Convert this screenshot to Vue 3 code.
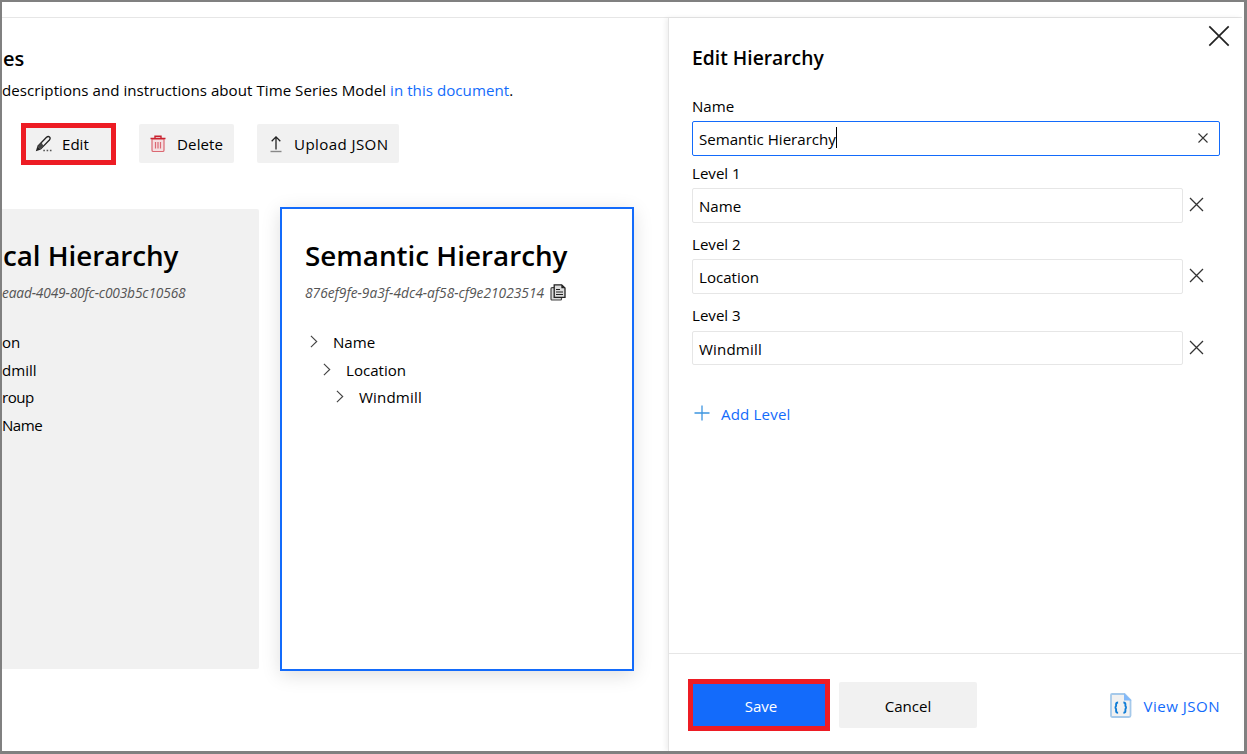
<script setup>
import { ref } from 'vue'

const hierarchyName = ref('Semantic Hierarchy')
const levels = ref(['Name', 'Location', 'Windmill'])
const physicalLevels = ['on', 'dmill', 'roup', 'Name']
</script>

<template>
  <div class="window">
    <header class="topbar"></header>
    <div class="body">
      <main class="main">
        <h2 class="page-title">es</h2>
        <p class="intro">descriptions and instructions about Time Series Model <a>in this document</a>.</p>
        <div class="toolbar">
          <button class="tool edit">
            <svg width="18" height="18" viewBox="0 0 18 18">
              <path d="M2.600 11.500 11.500 2.300Q13.200.800 14.500 2T14.400 5L5.500 14.100" fill="none" stroke="#222" stroke-width="1.300" />
              <path d="M.8 16.300 2.400 11.200 6 14.500Z" fill="#222" />
              <path d="M2.400 11.500 6.500 7.300 8.300 10.800 5.300 14.100Z" fill="#444" />
              <path d="M8.300 15.600h1.600M11.600 15.600h1.600M14.900 15.600h1.600" stroke="#555" stroke-width="1.500" />
            </svg>
            <span>Edit</span>
          </button>
          <button class="tool delete">
            <svg width="16" height="18" viewBox="0 0 16 18">
              <path d="M2 4v11.2q0 1.3 1.3 1.3h9.4q1.3 0 1.3-1.3V4Z" fill="#f5dfe1" stroke="#db6872" stroke-width="1.2" />
              <path d="M5.500 7v6.500M8 7v6.500M10.500 7v6.500" stroke="#db6872" stroke-width="1.200" />
              <path d="M.5 3.500h15M5 3V1.200h6V3" fill="none" stroke="#c9222f" stroke-width="1.400" />
            </svg>
            <span>Delete</span>
          </button>
          <button class="tool upload">
            <svg width="12" height="17" viewBox="0 0 12 17">
              <path d="M.5 15.500h11" stroke="#888" stroke-width="1.400" />
              <path d="M6 13.500V1M1.700 5.200 6 .9l4.300 4.300" fill="none" stroke="#222" stroke-width="1.300" />
            </svg>
            <span>Upload JSON</span>
          </button>
        </div>
        <div class="cards">
          <section class="card physical">
            <h1>cal Hierarchy</h1>
            <div class="guid">eaad-4049-80fc-c003b5c10568</div>
            <ul>
              <li v-for="l in physicalLevels" :key="l">{{ l }}</li>
            </ul>
          </section>
          <section class="card selected">
            <h1>Semantic Hierarchy</h1>
            <div class="guid">
              <span>876ef9fe-9a3f-4dc4-af58-cf9e21023514</span>
              <svg width="16" height="17" viewBox="0 0 16 17">
                <rect x="1" y="3.700" width="10.500" height="12.300" rx="1" fill="#d8d8d8" stroke="#444" stroke-width="1.200" />
                <path d="M4.200.8h7.500L15 4v9.300H4.200Z" fill="#ddd" stroke="#222" stroke-width="1.300" />
                <path d="M11.300.8V4.300H15Z" fill="#222" />
                <path d="M6 5.500h4M6 8h7M6 10.500h7" stroke="#222" stroke-width="1.200" />
              </svg>
            </div>
            <ul class="tree">
              <li v-for="l in levels" :key="l">
                <svg width="8" height="13" viewBox="0 0 8 13">
                  <path d="M.9.9 6.700 6.500.9 12.100" fill="none" stroke="#444" stroke-width="1.150" />
                </svg>
                <span>{{ l }}</span>
              </li>
            </ul>
          </section>
        </div>
      </main>

      <aside class="panel">
        <svg class="close" width="22" height="22" viewBox="0 0 22 22">
          <path d="M1.300 1.300 20.700 20.700M20.700 1.300 1.300 20.700" stroke="#222" stroke-width="1.700" />
        </svg>
        <form class="form">
          <h2>Edit Hierarchy</h2>
          <label class="name-label">Name</label>
          <div class="field focused">
            <span>{{ hierarchyName }}</span><i class="caret"></i>
            <svg width="10" height="10" viewBox="0 0 10 10">
              <path d="M.5.500 9.500 9.500M9.500.500.500 9.500" stroke="#333" stroke-width="1.100" />
            </svg>
          </div>
          <div v-for="(l, i) in levels" :key="l" class="level">
            <label>Level {{ i + 1 }}</label>
            <div class="row">
              <div class="field">{{ l }}</div>
              <svg width="15" height="15" viewBox="0 0 15 15">
                <path d="M1 1 14 14M14 1 1 14" stroke="#333" stroke-width="1.300" />
              </svg>
            </div>
          </div>
          <a class="add">
            <svg width="16" height="16" viewBox="0 0 16 16">
              <path d="M8 .5v15M.5 8h15" stroke="#3d95e0" stroke-width="1.300" />
            </svg>
            <span>Add Level</span>
          </a>
        </form>
        <footer class="footer">
          <button class="save">Save</button>
          <button class="cancel">Cancel</button>
          <a class="json">
            <svg width="22" height="25" viewBox="0 0 22 25">
              <path d="M2 1h12.500L20.500 7v15.500q0 1.500-1.500 1.500H2.500Q1 24 1 22.500V2q0-1 1-1Z" fill="#f1f1f1" stroke="#a5c9ea" stroke-width="1.800" />
              <path d="M14 .2 21.500 7.500H14Z" fill="#83b9f9" />
              <path d="M8.100 9.500q-2 0-2 1.800v1.500q0 1.400-1.300 1.700 1.300.3 1.300 1.700v1.800q0 1.800 2 1.800M13.400 9.500q2 0 2 1.800v1.500q0 1.400 1.300 1.700-1.300.3-1.300 1.700v1.800q0 1.800-2 1.800" fill="none" stroke="#0f7cd6" stroke-width="1.900" />
            </svg>
            <span>View JSON</span>
          </a>
        </footer>
      </aside>
    </div>
  </div>
</template>

<style>
body { margin: 0; }
</style>

<style scoped>
* { box-sizing: border-box; }
.window {
  width: 1247px;
  height: 754px;
  border: solid #808080;
  border-width: 2px 3px 3px 2px;
  background: #fff;
  overflow: hidden;
  color: #000;
  font: 15.1px/22px "Open Sans", "Noto Sans", sans-serif;
  white-space: nowrap;
}
h1, h2, p, ul { margin: 0; padding: 0; }
ul { list-style: none; }
svg { display: block; flex: none; }
button { border: 0; font: inherit; color: inherit; padding: 0; }
a { color: #136bfb; }
.topbar { height: 16px; width: 1240px; border-bottom: 1px solid #e6e6e6; }
.body { display: flex; height: 733px; }
.main { width: 666px; flex: none; overflow: hidden; }
.page-title { font-size: 20px; font-weight: 600; line-height: 28px; margin: 27px 0 0 1px; }
.intro { height: 22px; margin-top: 6px; letter-spacing: .04px; }
.toolbar { display: flex; align-items: flex-start; height: 42px; margin: 22px 0 0 19px; }
.tool { display: flex; align-items: center; height: 39px; margin-top: 1px; background: #f1f1f1; border-radius: 2px; }
.tool span { padding-top: 1px; }
.edit { width: 95px; height: 42px; margin-top: 0; border: 5px solid #ed1c24; border-radius: 0; padding-left: 9px; gap: 9px; }
.edit span { padding-top: 0; }
.delete { width: 95px; margin-left: 23px; padding-left: 11px; gap: 11px; letter-spacing: .1px; }
.upload { width: 142px; margin-left: 23px; padding-left: 13px; gap: 12px; letter-spacing: .4px; }
.upload svg { margin-top: 1px; }
.cards { display: flex; align-items: center; height: 464px; margin-top: 42px; }
.card { flex: none; }
.card h1 { font-size: 27.8px; font-weight: 600; line-height: 40px; }
.physical { width: 257px; height: 460px; background: #f1f1f1; border-radius: 0 2px 2px 0; padding: 26px 0 0 1px; }
.physical h1 { letter-spacing: -.05px; }
.selected { width: 354px; height: 464px; margin-left: 21px; border: 2px solid #136bfb; padding: 26px 0 0 23px; box-shadow: 0 4px 18px rgba(0, 0, 0, .13); }
.guid { display: flex; gap: 6px; height: 20px; margin-top: 8px; font-size: 13.75px; line-height: 20px; font-style: italic; color: #555; }
.guid svg { margin-top: 1px; }
.physical .guid { margin-left: -1px; letter-spacing: -.16px; }
.card ul { margin-top: 26px; }
.physical ul { margin-left: -1px; }
.card li { height: 27.6px; line-height: 27.6px; }
.physical li:nth-child(n+3) { letter-spacing: -.5px; }
.tree li { display: flex; align-items: center; gap: 15px; padding-left: 5px; }
.tree li:nth-child(2) { padding-left: 18px; }
.tree li:nth-child(3) { padding-left: 31px; letter-spacing: .15px; }
.tree svg { margin-top: -2px; }
.panel { position: relative; width: 574px; flex: none; display: flex; flex-direction: column; border-left: 1px solid #e4e4e4; box-shadow: -2px 0 5px rgba(0, 0, 0, .07); }
.close { position: absolute; top: 7px; right: 12px; }
.form { flex: 1; padding: 26px 0 0 23px; }
.form h2 { font-size: 19.3px; font-weight: 600; line-height: 28px; }
label { display: block; height: 22px; }
.name-label { margin-top: 23px; height: 26px; }
.field { display: flex; align-items: center; width: 491px; height: 35px; border: 1px solid #e6e6e6; border-radius: 2px; padding: 0 6px; }
.focused { width: 528px; border-color: #136bfb; padding-right: 11px; }
.focused svg { margin: -1px 0 0 auto; }
.caret { width: 1px; height: 21px; background: #000; margin-top: -2px; }
.level { height: 71.4px; padding-top: 6px; }
.level label { height: 26px; }
.level:nth-last-child(2) { padding-top: 5px; }
.level:nth-last-child(2) label { height: 27px; }
.level:nth-last-child(2) .field { height: 34px; padding-top: 2px; letter-spacing: .15px; }
.row { display: flex; gap: 6px; }
.row svg { margin-top: 9px; }
.add { display: flex; align-items: center; gap: 11px; margin: 33px 0 0 2px; letter-spacing: .15px; }
.add svg { margin-top: -3px; }
.footer { display: flex; align-items: center; height: 98px; width: 573px; border-top: 1px solid #e6e6e6; padding: 5px 22px 0 19px; }
.save { width: 142px; height: 52px; background: #136bfb; color: #fff; border: 5px solid #ed1c24; padding: 2px 0 0 4px; }
.cancel { width: 138px; height: 46px; margin-left: 9px; padding-top: 2px; background: #f1f1f1; border-radius: 2px; }
.json { display: flex; align-items: center; gap: 12px; margin-left: auto; letter-spacing: .45px; }
.json span { padding-top: 2px; }
</style>
